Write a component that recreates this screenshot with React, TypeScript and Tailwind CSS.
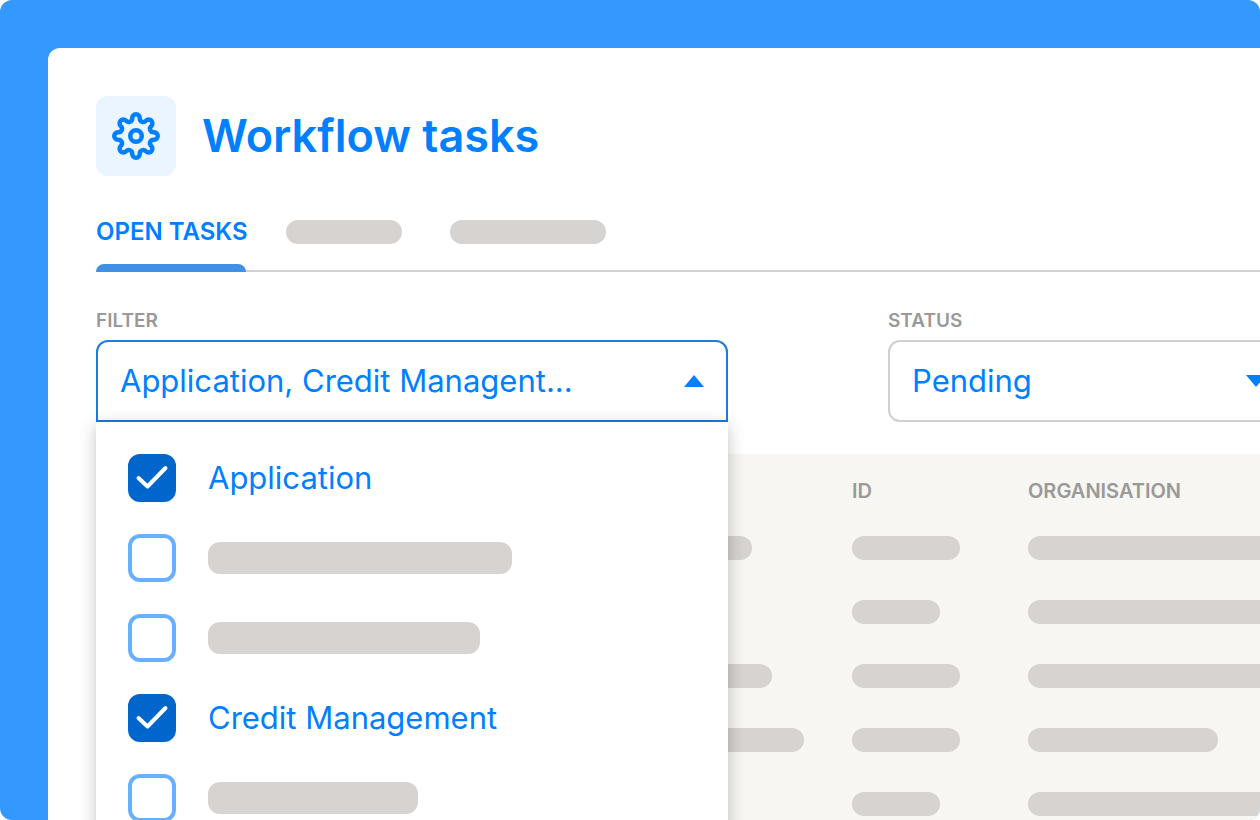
import { useState } from 'react';
import { clsx } from 'clsx';

const options = [
  { id: 'application', label: 'Application', checked: true },
  { id: 'option-2', width: 'w-[304px]', checked: false },
  { id: 'option-3', width: 'w-[272px]', checked: false },
  { id: 'credit', label: 'Credit Management', checked: true },
  { id: 'option-5', width: 'w-[210px]', checked: false },
];

const rows = [
  { task: 'w-[632px]', id: 'w-[108px]', organisation: 'w-[260px]' },
  { task: 'w-[560px]', id: 'w-[88px]', organisation: 'w-[260px]' },
  { task: 'w-[652px]', id: 'w-[108px]', organisation: 'w-[260px]' },
  { task: 'w-[684px]', id: 'w-[108px]', organisation: 'w-[190px]' },
  { task: 'w-[560px]', id: 'w-[88px]', organisation: 'w-[260px]' },
];

// Outline of a cog with eight round teeth, centred on 24,24
function cogPath() {
  let d = '';
  for (let i = 0; i < 8; i++) {
    const a = (i * Math.PI) / 4;
    const point = (x: number, y: number) =>
      `${(24 + x * Math.cos(a) - y * Math.sin(a)).toFixed(2)} ${(24 + x * Math.sin(a) + y * Math.cos(a)).toFixed(2)}`;
    d += i === 0 ? `M${point(-3.75, -17.5)}` : `A3.5 3.5 0 0 0 ${point(-3.75, -17.5)}`;
    d += `L${point(-3.75, -18)}A3.75 3.75 0 0 1 ${point(3.75, -18)}L${point(3.75, -17.5)}`;
  }
  return `${d}A3.5 3.5 0 0 0 20.25 6.5Z`;
}

function CogIcon() {
  return (
    <svg viewBox="0 0 48 48" className="w-12 h-12" fill="none" stroke="currentColor" strokeWidth="4.5" aria-hidden="true">
      <path d={cogPath()} />
      <circle cx="24" cy="24" r="5.75" />
    </svg>
  );
}

function Caret({ className }: { className?: string }) {
  return (
    <svg viewBox="0 0 20 12" className={clsx('w-5 h-3', className)} fill="currentColor" aria-hidden="true">
      <path d="M10 0 20 12H0Z" />
    </svg>
  );
}

function Placeholder({ className }: { className: string }) {
  return <span className={clsx('block bg-[#d6d3d1]', className)} />;
}

function FilterMenu() {
  const [open, setOpen] = useState(true);
  const [checked, setChecked] = useState(options.filter((o) => o.checked).map((o) => o.id));

  const toggle = (id: string) => {
    setChecked(checked.includes(id) ? checked.filter((c) => c !== id) : [...checked, id]);
  };

  return (
    <div className="relative w-[632px] shrink-0">
      <label htmlFor="filter" className="block mb-[7px] text-[19px] leading-6 font-semibold text-[#999]">
        FILTER
      </label>
      <button
        id="filter"
        type="button"
        aria-expanded={open}
        onClick={() => setOpen(!open)}
        className={clsx(
          'flex items-center justify-between w-full h-[82px] px-[22px] border-2 border-[#1a7be0] text-[31px] text-[#007fff]',
          open ? 'rounded-t-xl' : 'rounded-xl',
        )}
      >
        <span>Application, Credit Managent...</span>
        <Caret className={open ? '' : 'rotate-180'} />
      </button>

      {open && (
        <ul className="absolute top-full left-0 z-10 w-full p-8 flex flex-col gap-8 bg-white shadow-[0_4px_16px_rgba(0,0,0,0.24)]">
          {options.map((option) => (
            <li key={option.id}>
              <label className="flex items-center gap-8 h-12 text-[31px] text-[#007fff]">
                <span className="relative w-12 h-12">
                  <input
                    type="checkbox"
                    aria-label={option.label ?? 'Loading'}
                    checked={checked.includes(option.id)}
                    onChange={() => toggle(option.id)}
                    className="peer block appearance-none w-12 h-12 rounded-xl border-4 border-[#66b0ff] checked:border-[#0066cc] checked:bg-[#0066cc]"
                  />
                  <svg
                    viewBox="0 0 48 48"
                    className="absolute inset-0 hidden peer-checked:block pointer-events-none"
                    fill="none"
                    stroke="white"
                    strokeWidth="4"
                    strokeLinecap="round"
                    strokeLinejoin="round"
                    aria-hidden="true"
                  >
                    <path d="M10.5 24 19.5 32.5 37.5 14" />
                  </svg>
                </span>
                {option.label ?? <Placeholder className={clsx('h-8 rounded-xl', option.width)} />}
              </label>
            </li>
          ))}
        </ul>
      )}
    </div>
  );
}

export default function App() {
  return (
    <div className="h-screen overflow-hidden rounded-xl bg-[#3399ff] pt-12 pl-12 font-['Inter',sans-serif]">
      <main className="h-full overflow-hidden rounded-tl-xl bg-white pt-12 pl-12">
        <header className="flex items-center gap-[26px]">
          <div className="flex items-center justify-center w-20 h-20 rounded-xl bg-[#ebf5ff] text-[#007fff]">
            <CogIcon />
          </div>
          <h1 className="text-[45px] leading-[60px] font-semibold text-[#007fff]">Workflow tasks</h1>
        </header>

        <nav className="flex h-16 mt-8 border-b-2 border-[#d0d0d0]">
          <button
            type="button"
            className="relative w-[150px] pb-[14px] text-left whitespace-nowrap text-[24px] font-semibold text-[#007fff]"
          >
            OPEN TASKS
            <span className="absolute left-0 -bottom-0.5 w-full h-2 rounded-t-lg bg-[#4090e6]" />
          </button>
          <button type="button" aria-label="Loading" className="ml-10 pb-[14px]">
            <Placeholder className="w-[116px] h-6 rounded-full" />
          </button>
          <button type="button" aria-label="Loading" className="ml-12 pb-[14px]">
            <Placeholder className="w-[156px] h-6 rounded-full" />
          </button>
        </nav>

        <div className="flex gap-40 mt-[37px]">
          <FilterMenu />
          <div className="w-[402px] shrink-0">
            <label htmlFor="status" className="block mb-[7px] text-[19px] leading-6 font-semibold text-[#999]">
              STATUS
            </label>
            <div className="relative">
              <select
                id="status"
                className="block appearance-none w-full h-[82px] px-[22px] rounded-xl border-2 border-[#d0d0d0] bg-white text-[31px] text-[#007fff]"
              >
                <option>Pending</option>
              </select>
              <Caret className="absolute right-6 top-[35px] rotate-180 text-[#007fff] pointer-events-none" />
            </div>
          </div>
        </div>

        <table className="mt-8 w-full table-fixed bg-[#f7f6f2] text-left">
          <thead>
            <tr className="text-[20px] leading-6 text-[#999]">
              <th className="w-[756px]" aria-label="Task" />
              <th className="w-[176px] pt-[25px] pb-[13px] font-semibold">ID</th>
              <th className="pt-[25px] pb-[13px] font-semibold">ORGANISATION</th>
            </tr>
          </thead>
          <tbody>
            {rows.map((row, i) => (
              <tr key={i} className="h-16">
                <td className="pl-6">
                  <Placeholder className={clsx('h-6 rounded-full', row.task)} />
                </td>
                <td>
                  <Placeholder className={clsx('h-6 rounded-full', row.id)} />
                </td>
                <td>
                  <Placeholder className={clsx('h-6 rounded-full', row.organisation)} />
                </td>
              </tr>
            ))}
          </tbody>
        </table>
      </main>
    </div>
  );
}
